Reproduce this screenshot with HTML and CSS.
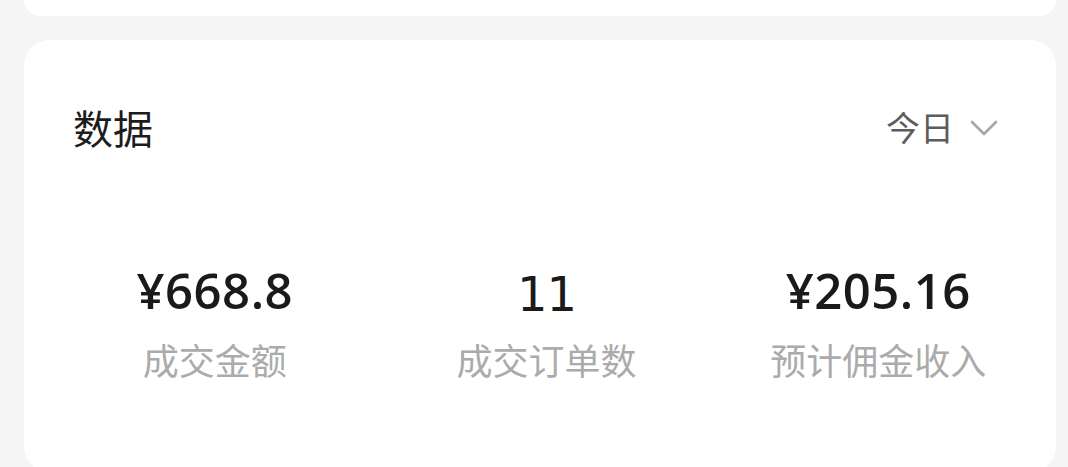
FILE: index.html
```html
<!DOCTYPE html>
<html lang="zh">
<head>
<meta charset="utf-8">
<link rel="stylesheet" href="styles.css">
</head>
<body>
<div class="page">
  <div class="card card-top"></div>
  <div class="card card-data">
    <div class="head">
      <div class="title">数据</div>
      <div class="range">今日
        <svg class="chev" width="28" height="18" viewBox="0 0 28 18"><path d="M2 3 L14 15 L26 3" fill="none" stroke="#a6a6a6" stroke-width="2.6" stroke-linecap="round" stroke-linejoin="round"/></svg>
      </div>
    </div>
    <div class="stats">
      <div class="stat">
        <div class="num">¥668.8</div>
        <div class="label">成交金额</div>
      </div>
      <div class="stat">
        <div class="num num-plain">11</div>
        <div class="label">成交订单数</div>
      </div>
      <div class="stat">
        <div class="num">¥205.16</div>
        <div class="label">预计佣金收入</div>
      </div>
    </div>
  </div>
</div>
</body>
</html>
```

FILE: styles.css
```css
html, body {
  margin: 0;
  padding: 0;
  background: #f5f5f5;
  font-family: "Noto Sans CJK SC", "Noto Sans", sans-serif;
}
.page {
  display: flex;
  flex-direction: column;
  gap: 24px;
  padding: 0 12px 0 24px;
}
.card {
  background: #ffffff;
  border-radius: 26px;
}
.card-top {
  height: 16px;
  border-radius: 0 0 24px 24px;
}
.card-data {
  height: 432px;
  padding: 0;
}
.head {
  display: flex;
  justify-content: space-between;
  align-items: center;
  padding: 62px 58px 0 49px;
  height: 50px;
}
.title {
  font-size: 40px;
  color: #1c1c1c;
  line-height: 50px;
}
.range {
  display: flex;
  align-items: center;
  gap: 16px;
  font-size: 34px;
  color: #5c5c5c;
  line-height: 50px;
}
.chev {
  display: block;
  margin-top: 2px;
}
.stats {
  display: grid;
  grid-template-columns: repeat(3, 1fr);
  padding: 0 12px 0 25px;
  margin-top: 110px;
}
.stat {
  display: flex;
  flex-direction: column;
  align-items: center;
}
.num {
  font-family: "Open Sans", "Noto Sans", sans-serif;
  font-weight: 600;
  font-size: 49px;
  line-height: 56px;
  color: #1a1a1a;
  letter-spacing: 0.5px;
}
.num-plain {
  font-family: "DejaVu Sans", sans-serif;
  font-weight: 400;
  font-size: 48px;
  letter-spacing: -1px;
  position: relative;
  top: 4px;
}
.label {
  margin-top: 19px;
  font-size: 36px;
  line-height: 44px;
  color: #ababab;
}
```
